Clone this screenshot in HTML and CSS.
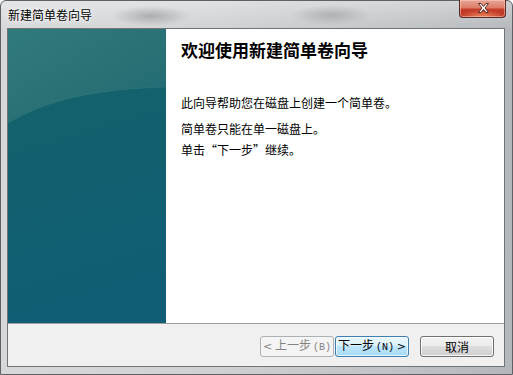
FILE: index.html
```html
<!DOCTYPE html>
<html lang="zh-CN">
<head>
<meta charset="utf-8">
<title>新建简单卷向导</title>
<link rel="stylesheet" href="styles.css">
</head>
<body>
<div class="window">
  <div class="titlebar">
    <span class="title">新建简单卷向导</span>
    <div class="close">
      <svg width="47" height="18" viewBox="0 0 47 18">
        <path d="M18.5 4.5 L21 4.5 L23.5 7.5 L26 4.5 L28.5 4.5 L25 9 L28.5 13.5 L26 13.5 L23.5 10.5 L21 13.5 L18.5 13.5 L22 9 Z" fill="#ffffff" stroke="#5a2a22" stroke-width="1" stroke-linejoin="round"/>
      </svg>
    </div>
  </div>
  <div class="client">
    <div class="main">
      <div class="side">
        <svg width="158" height="294" viewBox="0 0 158 294">
          <defs>
            <linearGradient id="bg" x1="0" y1="0" x2="0.3" y2="1">
              <stop offset="0" stop-color="#317a7c"/>
              <stop offset="0.3" stop-color="#2a7175"/>
              <stop offset="1" stop-color="#0f5f75"/>
            </linearGradient>
            <linearGradient id="lo" x1="0" y1="0" x2="0.2" y2="1">
              <stop offset="0" stop-color="#14626b"/>
              <stop offset="1" stop-color="#0f5e75"/>
            </linearGradient>
          </defs>
          <rect width="158" height="294" fill="url(#bg)"/>
          <path d="M0 94 C40 70 90 60 158 58 L158 294 L0 294 Z" fill="url(#lo)"/>
          <path d="M0 94 C40 70 90 60 158 58" fill="none" stroke="#3a8083" stroke-width="1" opacity="0.4"/>
        </svg>
      </div>
      <div class="content">
        <h1 class="heading">欢迎使用新建简单卷向导</h1>
        <p class="line first">此向导帮助您在磁盘上创建一个简单卷。</p>
        <p class="line second">简单卷只能在单一磁盘上。</p>
        <p class="line third">单击“下一步”继续。</p>
      </div>
    </div>
    <div class="footer">
      <div class="btn disabled"><span class="label"><span class="arrow">&lt;</span> 上一步<span class="key">(B)</span></span></div>
      <div class="btn focused"><span class="label">下一步<span class="key">(N)</span> <span class="arrow">&gt;</span></span></div>
      <div class="btn cancel"><span class="label">取消</span></div>
    </div>
  </div>
</div>
</body>
</html>
```
FILE: styles.css
```css
html, body {
  margin: 0;
  padding: 0;
}
body {
  width: 513px;
  height: 375px;
  overflow: hidden;
  font-family: "Noto Sans CJK SC", "Noto Sans", sans-serif;
}
.window {
  width: 513px;
  height: 375px;
  box-sizing: border-box;
  display: flex;
  flex-direction: column;
  border: 1px solid #5d6166;
  border-radius: 6px 6px 0 0;
  background:
    radial-gradient(ellipse 40px 10px at 150px 15px, rgba(90,90,90,0.35), transparent),
    radial-gradient(ellipse 40px 10px at 330px 14px, rgba(100,100,100,0.3), transparent),
    linear-gradient(180deg, rgba(255,255,255,0.35) 0, rgba(255,255,255,0) 30px),
    linear-gradient(90deg, #d6d8da 0, #cfd1d3 40%, #bfc2c4 80%, #b4b7ba 100%);
}
.titlebar {
  height: 27px;
  display: flex;
  align-items: flex-start;
  padding-left: 7px;
}
.title {
  font-size: 12px;
  line-height: 12px;
  margin-top: 8px;
  color: #000;
  text-shadow: 0 0 6px #ffffff, 0 0 3px #ffffff;
}
.close {
  margin-left: auto;
  margin-right: 6px;
  width: 47px;
  height: 18px;
  margin-top: -1px;
  box-sizing: border-box;
  border: 1px solid #5b2a22;
  border-top: none;
  border-radius: 0 0 4px 4px;
  background:
    radial-gradient(ellipse 24px 7px at 50% 100%, rgba(255,170,120,0.7), transparent),
    linear-gradient(180deg, #e8a595 0, #dc7d68 45%, #c63e2a 55%, #bc3523 100%);
  box-shadow: inset 0 0 0 1px rgba(255,210,200,0.5);
  overflow: hidden;
}
.close svg {
  display: block;
  margin-top: -1px;
}
.client {
  flex: 1;
  margin: 0 7px 7px 6px;
  display: flex;
  flex-direction: column;
  border: 1px solid #6f7478;
  background: #f0f0f0;
}
.main {
  height: 294px;
  display: flex;
  background: #ffffff;
}
.side {
  width: 158px;
  height: 294px;
}
.side svg {
  display: block;
}
.content {
  flex: 1;
  padding: 11px 0 0 15px;
}
.heading {
  margin: 0;
  font-size: 17px;
  line-height: 20px;
  font-weight: bold;
  color: #000;
}
.line {
  margin: 0;
  font-size: 12px;
  line-height: 14px;
  color: #000;
}
.first { margin-top: 36px; }
.second { margin-top: 12px; }
.third { margin-top: 7px; }
.footer {
  flex: 1;
  border-top: 1px solid #a0a0a0;
  display: flex;
  justify-content: flex-end;
  align-items: flex-start;
  padding: 12px 10px 0 0;
}
.btn {
  width: 74px;
  height: 21px;
  box-sizing: border-box;
  border-radius: 3px;
  display: flex;
  align-items: center;
  justify-content: center;
  font-size: 12px;
  line-height: 12px;
  color: #000;
}
.label {
  white-space: pre;
}
.arrow {
  font-family: "DejaVu Sans", sans-serif;
  font-size: 11px;
}
.key {
  font-family: "Liberation Mono", monospace;
  font-size: 10px;
  margin-left: 2px;
}
.disabled {
  border: 1px solid #adb2b5;
  background: #f4f4f4;
  color: #838383;
}
.focused {
  margin-left: 1px;
  border: 1px solid #3c7fb1;
  background: linear-gradient(180deg, #eaf6fd 0, #d9f0fc 50%, #bee6fd 50%, #a7d9f5 100%);
  box-shadow: inset 0 0 0 1px rgba(255,255,255,0.7);
}
.cancel {
  margin-left: 11px;
  border: 1px solid #707070;
  background: linear-gradient(180deg, #f2f2f2 0, #ebebeb 50%, #dddddd 50%, #cfcfcf 100%);
  box-shadow: inset 0 0 0 1px rgba(255,255,255,0.8);
}
```
